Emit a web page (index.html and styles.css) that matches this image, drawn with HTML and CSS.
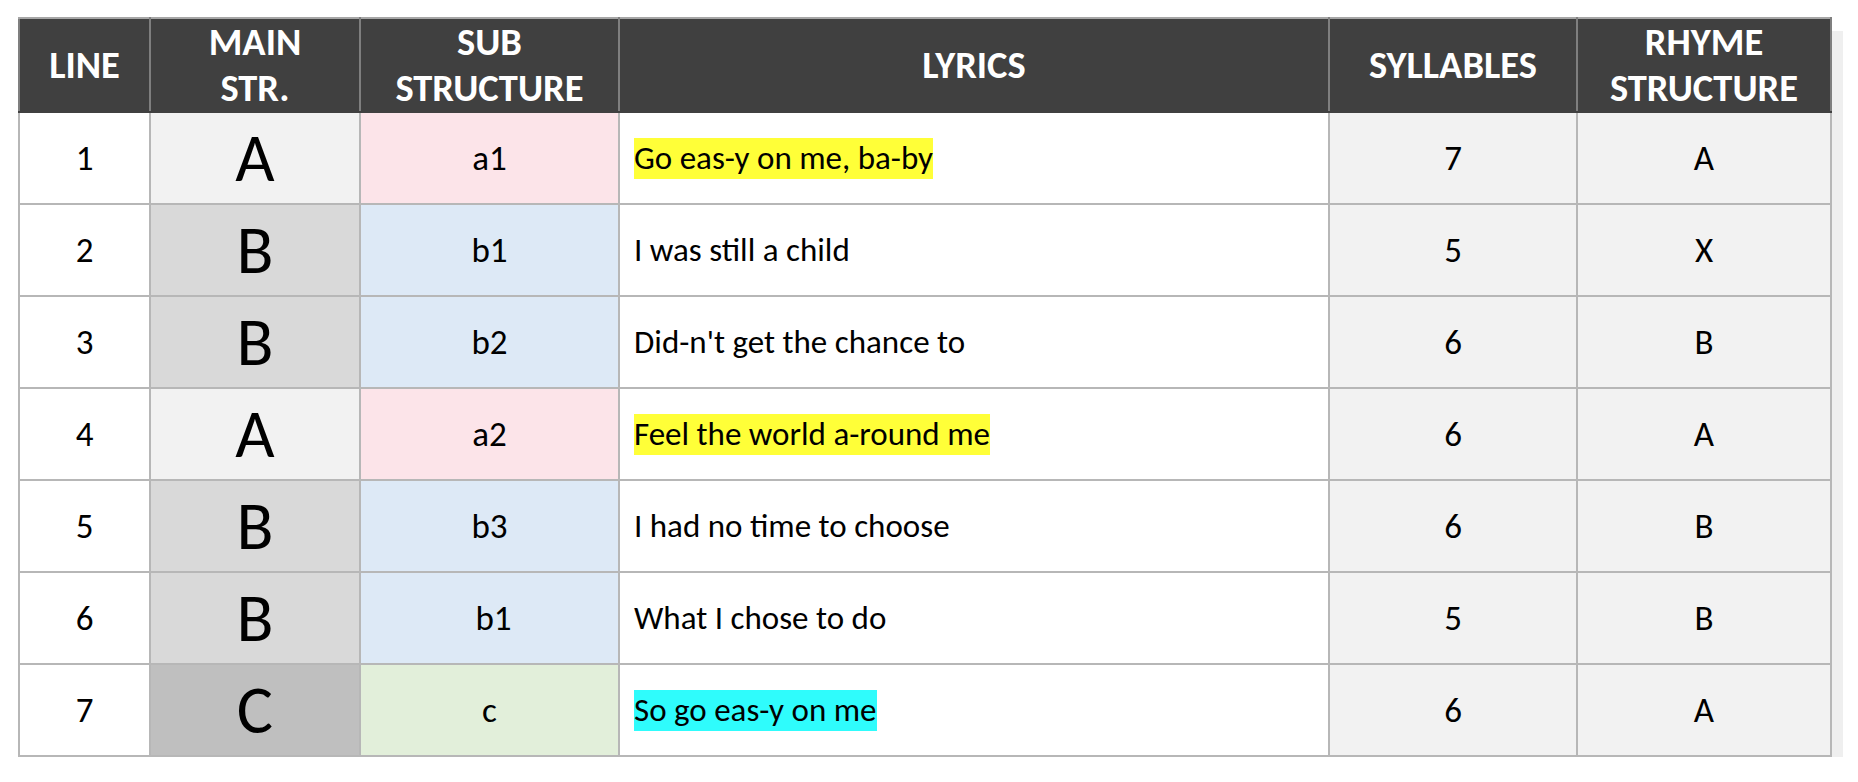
FILE: index.html
```html
<!DOCTYPE html>
<html>
<head>
<meta charset="utf-8">
<link rel="stylesheet" href="styles.css">
</head>
<body>
<div class="page">
  <div class="sheet">
    <table class="grid">
      <colgroup>
        <col class="c-line">
        <col class="c-main">
        <col class="c-sub">
        <col class="c-lyr">
        <col class="c-syl">
        <col class="c-rhy">
      </colgroup>
      <thead>
        <tr>
          <th>LINE</th>
          <th>MAIN<br>STR.</th>
          <th>SUB<br>STRUCTURE</th>
          <th>LYRICS</th>
          <th>SYLLABLES</th>
          <th>RHYME<br>STRUCTURE</th>
        </tr>
      </thead>
      <tbody>
        <tr>
          <td class="num">1</td>
          <td class="main m-a">A</td>
          <td class="sub s-a">a1</td>
          <td class="lyr"><span class="hl hl-y">Go eas-y on me, ba-by</span></td>
          <td class="grey">7</td>
          <td class="grey">A</td>
        </tr>
        <tr>
          <td class="num">2</td>
          <td class="main m-b">B</td>
          <td class="sub s-b">b1</td>
          <td class="lyr"><span class="hl">I was still a child</span></td>
          <td class="grey">5</td>
          <td class="grey">X</td>
        </tr>
        <tr>
          <td class="num">3</td>
          <td class="main m-b">B</td>
          <td class="sub s-b">b2</td>
          <td class="lyr"><span class="hl">Did-n't get the chance to</span></td>
          <td class="grey">6</td>
          <td class="grey">B</td>
        </tr>
        <tr>
          <td class="num">4</td>
          <td class="main m-a">A</td>
          <td class="sub s-a">a2</td>
          <td class="lyr"><span class="hl hl-y">Feel the world a-round me</span></td>
          <td class="grey">6</td>
          <td class="grey">A</td>
        </tr>
        <tr>
          <td class="num">5</td>
          <td class="main m-b">B</td>
          <td class="sub s-b">b3</td>
          <td class="lyr"><span class="hl">I had no time to choose</span></td>
          <td class="grey">6</td>
          <td class="grey">B</td>
        </tr>
        <tr>
          <td class="num">6</td>
          <td class="main m-b">B</td>
          <td class="sub s-b">&nbsp;b1</td>
          <td class="lyr"><span class="hl">What I chose to do</span></td>
          <td class="grey">5</td>
          <td class="grey">B</td>
        </tr>
        <tr>
          <td class="num">7</td>
          <td class="main m-c">C</td>
          <td class="sub s-c">c</td>
          <td class="lyr"><span class="hl hl-c">So go eas-y on me</span></td>
          <td class="grey">6</td>
          <td class="grey">A</td>
        </tr>
      </tbody>
    </table>
  </div>
</div>
</body>
</html>
```

FILE: styles.css
```css
html, body {
  margin: 0;
  padding: 0;
  background: #ffffff;
}

.page {
  padding: 17px 0 0 18px;
  font-family: Carlito, Lato, "Liberation Sans", sans-serif;
  color: #000;
}

.sheet {
  position: relative;
  width: 1812px;
}

.sheet::before {
  content: "";
  position: absolute;
  left: 13px;
  top: 14px;
  right: -13px;
  bottom: -14px;
  background: #efefef;
  z-index: 0;
}

.grid {
  position: relative;
  z-index: 1;
  width: 1812px;
  border-collapse: collapse;
  table-layout: fixed;
  border: 2px solid #a6a6a6;
}

.c-line { width: 131px; }
.c-main { width: 210px; }
.c-sub  { width: 259px; }
.c-lyr  { width: 710px; }
.c-syl  { width: 248px; }
.c-rhy  { width: 254px; }

.grid th {
  height: 92px;
  padding: 0;
  background: #404040;
  color: #ffffff;
  font-weight: 700;
  font-size: 38.5px;
  line-height: 46px;
  text-align: center;
  vertical-align: middle;
  border: 2px solid #7f7f7f;
  border-top-color: #a6a6a6;
  border-bottom-color: #404040;
}

.grid td {
  height: 90px;
  padding: 0;
  font-size: 35px;
  line-height: 44px;
  text-align: center;
  vertical-align: middle;
  border: 2px solid #b7b7b7;
  background: #ffffff;
}

.grid td.main {
  font-size: 68px;
  line-height: 80px;
}

.m-a { background: #f2f2f2 !important; }
.m-b { background: #d9d9d9 !important; }
.m-c { background: #bfbfbf !important; }

.s-a { background: #fce4e9 !important; }
.s-b { background: #dde9f6 !important; }
.s-c { background: #e2efda !important; }

.grid td.grey { background: #f2f2f2; }

.grid td.lyr {
  text-align: left;
  padding-left: 14px;
  font-size: 33px;
}

.hl {
  display: inline-block;
  line-height: 41px;
}

.hl-y { background: #ffff38; }
.hl-c { background: #2ffcfc; }
```
